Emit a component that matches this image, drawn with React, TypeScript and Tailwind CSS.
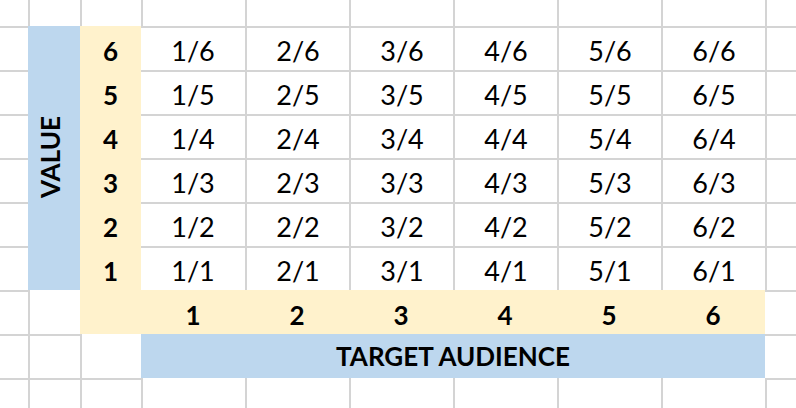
import clsx from 'clsx';

// literal class lists so Tailwind can see every name
const colStart = [
  'col-start-1', 'col-start-2', 'col-start-3', 'col-start-4', 'col-start-5',
  'col-start-6', 'col-start-7', 'col-start-8', 'col-start-9', 'col-start-10',
];
const rowStart = [
  'row-start-1', 'row-start-2', 'row-start-3', 'row-start-4', 'row-start-5',
  'row-start-6', 'row-start-7', 'row-start-8', 'row-start-9', 'row-start-10',
];

const BLUE = 'bg-[#bdd7ee]';
const YELLOW = 'bg-[#fff2cc]';

// cells covered by a fill (fills hide the grid lines around them)
function isFilled(r: number, c: number) {
  if (c === 1 && r >= 1 && r <= 6) return true;
  if (c === 2 && r >= 1 && r <= 7) return true;
  if ((r === 7 || r === 8) && c >= 3 && c <= 8) return true;
  return false;
}

function WhiteCell({ r, c }: { r: number; c: number }) {
  const left = c > 0 && !isFilled(r, c - 1);
  const top = r > 0 && !isFilled(r - 1, c);
  const isData = r >= 1 && r <= 6 && c >= 3 && c <= 8;
  return (
    <div
      className={clsx(
        colStart[c],
        rowStart[r],
        'flex items-end justify-center pb-[6px] border-[#d4d4d4]',
        left && 'border-l-2',
        top && 'border-t-2'
      )}
    >
      {isData && (
        <span className="leading-none text-[27px]">
          {c - 2}/{7 - r}
        </span>
      )}
    </div>
  );
}

export default function App() {
  const whites: JSX.Element[] = [];
  for (let r = 0; r < 10; r++) {
    for (let c = 0; c < 10; c++) {
      if (!isFilled(r, c)) whites.push(<WhiteCell key={`${r}-${c}`} r={r} c={c} />);
    }
  }

  return (
    <div className="w-[796px] h-[408px] overflow-hidden bg-white text-black text-[26px] font-[Lato,sans-serif] grid grid-cols-[28px_52px_61px_repeat(6,104px)_31px] grid-rows-[26px_repeat(8,44px)_30px]">
      {whites}

      {/* VALUE axis */}
      <div className={clsx(BLUE, 'col-start-2 row-start-2 row-span-6 flex items-center justify-center pr-[8px] pb-[3px]')}>
        <span className="inline-block -rotate-90 font-bold leading-none whitespace-nowrap">VALUE</span>
      </div>

      {/* value numbers */}
      {[6, 5, 4, 3, 2, 1].map((n, i) => (
        <div
          key={n}
          className={clsx(YELLOW, 'col-start-3', rowStart[i + 1], 'flex items-end justify-center pb-[6px]')}
        >
          <span className="font-bold leading-none">{n}</span>
        </div>
      ))}
      <div className={clsx(YELLOW, 'col-start-3 row-start-8')} />

      {/* audience numbers */}
      {[1, 2, 3, 4, 5, 6].map((n, i) => (
        <div
          key={n}
          className={clsx(YELLOW, colStart[i + 3], 'row-start-8 flex items-end justify-center pb-[6px]')}
        >
          <span className="font-bold leading-none">{n}</span>
        </div>
      ))}

      {/* TARGET AUDIENCE axis */}
      <div className={clsx(BLUE, 'col-start-4 col-span-6 row-start-9 flex items-center justify-center')}>
        <span className="font-bold leading-none">TARGET AUDIENCE</span>
      </div>
    </div>
  );
}
